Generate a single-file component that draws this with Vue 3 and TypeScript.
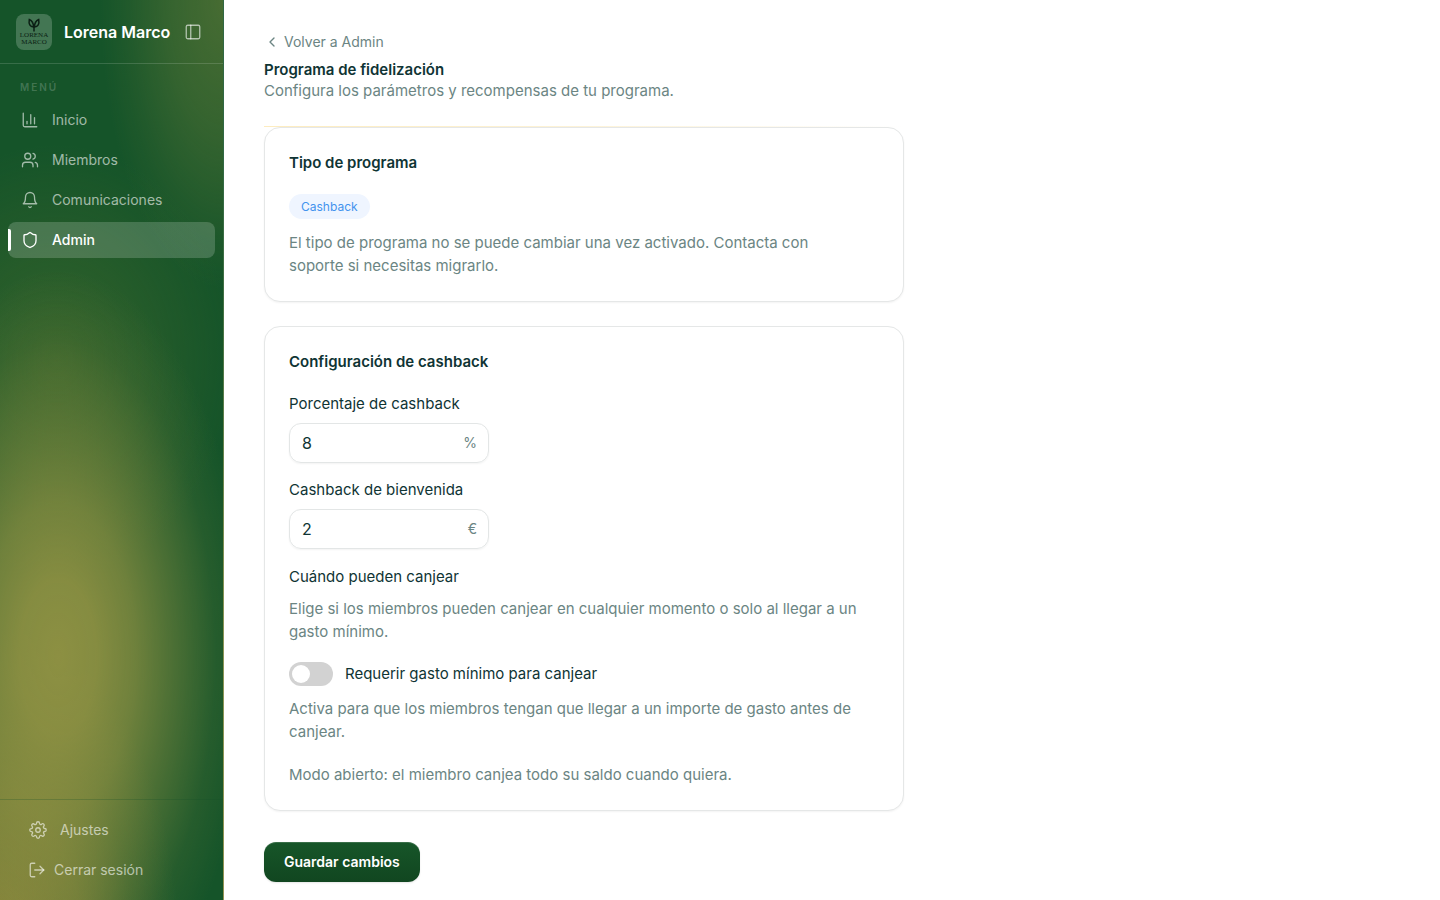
<script setup lang="ts">
import { ref } from 'vue'

interface NavItem {
  label: string
  active: boolean
  paths: string[]
}

const navItems: NavItem[] = [
  {
    label: 'Inicio',
    active: false,
    paths: ['M3 3v16a2 2 0 0 0 2 2h16', 'M18 17V9', 'M13 17V5', 'M8 17v-3'],
  },
  {
    label: 'Miembros',
    active: false,
    paths: [
      'M16 21v-2a4 4 0 0 0-4-4H6a4 4 0 0 0-4 4v2',
      'M13 7a4 4 0 1 1-8 0a4 4 0 0 1 8 0',
      'M22 21v-2a4 4 0 0 0-3-3.87',
      'M16 3.13a4 4 0 0 1 0 7.75',
    ],
  },
  {
    label: 'Comunicaciones',
    active: false,
    paths: ['M6 8a6 6 0 0 1 12 0c0 7 3 9 3 9H3s3-2 3-9', 'M10.3 21a1.94 1.94 0 0 0 3.4 0'],
  },
  {
    label: 'Admin',
    active: true,
    paths: [
      'M20 13c0 5-3.5 7.5-7.66 8.95a1 1 0 0 1-.67-.01C7.5 20.5 4 18 4 13V6a1 1 0 0 1 1-1c2 0 4.5-1.2 6.24-2.72a1.17 1.17 0 0 1 1.52 0C14.51 3.81 17 5 19 5a1 1 0 0 1 1 1z',
    ],
  },
]

const percentage = ref('8')
const welcome = ref('2')
const requireMinimum = ref(false)
</script>

<template>
  <div class="layout">
    <aside class="sidebar">
      <header class="brand">
        <div class="logo">
          <svg class="logo-mark" viewBox="0 0 28 14" aria-hidden="true">
            <path d="M14 13.500V7" />
            <path d="M13.500 9C10 9 8.500 6 9.300 1.500C12 2.500 13.500 5 13.500 9Z" />
            <path d="M14.500 9C18 9 19.500 6 18.700 1.500C16 2.500 14.500 5 14.500 9Z" />
          </svg>
          <span>LORENA</span>
          <span>MARCO</span>
        </div>
        <strong class="brand-name">Lorena Marco</strong>
        <button class="collapse" type="button" aria-label="Contraer menú">
          <svg class="icon" viewBox="0 0 24 24" aria-hidden="true">
            <rect x="3" y="3" width="18" height="18" rx="2" />
            <path d="M9 3v18" />
          </svg>
        </button>
      </header>

      <nav class="nav">
        <p class="nav-title">MENÚ</p>
        <a
          v-for="item in navItems"
          :key="item.label"
          href="#"
          class="nav-link"
          :class="{ active: item.active }"
        >
          <svg class="icon" viewBox="0 0 24 24" aria-hidden="true">
            <path v-for="d in item.paths" :key="d" :d="d" />
          </svg>
          <span>{{ item.label }}</span>
        </a>
      </nav>

      <footer class="side-footer">
        <a href="#" class="nav-link">
          <svg class="icon" viewBox="0 0 24 24" aria-hidden="true">
            <circle cx="12" cy="12" r="3" />
            <path
              d="M19.4 15a1.65 1.65 0 0 0 .33 1.82l.06.06a2 2 0 0 1 0 2.83 2 2 0 0 1-2.83 0l-.06-.06a1.65 1.65 0 0 0-1.82-.33 1.65 1.65 0 0 0-1 1.51V21a2 2 0 0 1-2 2 2 2 0 0 1-2-2v-.09A1.65 1.65 0 0 0 9 19.4a1.65 1.65 0 0 0-1.82.33l-.06.06a2 2 0 0 1-2.83 0 2 2 0 0 1 0-2.83l.06-.06a1.65 1.65 0 0 0 .33-1.82 1.65 1.65 0 0 0-1.51-1H3a2 2 0 0 1-2-2 2 2 0 0 1 2-2h.09A1.65 1.65 0 0 0 4.6 9a1.65 1.65 0 0 0-.33-1.82l-.06-.06a2 2 0 0 1 0-2.83 2 2 0 0 1 2.83 0l.06.06a1.65 1.65 0 0 0 1.82.33H9a1.65 1.65 0 0 0 1-1.51V3a2 2 0 0 1 2-2 2 2 0 0 1 2 2v.09a1.65 1.65 0 0 0 1 1.51 1.65 1.65 0 0 0 1.82-.33l.06-.06a2 2 0 0 1 2.83 0 2 2 0 0 1 0 2.83l-.06.06a1.65 1.65 0 0 0-.33 1.82V9a1.65 1.65 0 0 0 1.51 1H21a2 2 0 0 1 2 2 2 2 0 0 1-2 2h-.09a1.65 1.65 0 0 0-1.51 1z"
            />
          </svg>
          <span>Ajustes</span>
        </a>
        <button class="nav-link logout" type="button">
          <svg class="icon" viewBox="0 0 24 24" aria-hidden="true">
            <path d="M9 21H5a2 2 0 0 1-2-2V5a2 2 0 0 1 2-2h4" />
            <path d="m16 17 5-5-5-5" />
            <path d="M21 12H9" />
          </svg>
          <span>Cerrar sesión</span>
        </button>
      </footer>
    </aside>

    <main class="main">
      <div class="content">
        <a href="#" class="back">
          <svg class="icon" viewBox="0 0 24 24" aria-hidden="true"><path d="m15 18-6-6 6-6" /></svg>
          <span>Volver a Admin</span>
        </a>
        <header class="page-head">
          <h1>Programa de fidelización</h1>
          <p>Configura los parámetros y recompensas de tu programa.</p>
        </header>

        <section class="card">
          <h2>Tipo de programa</h2>
          <span class="badge">Cashback</span>
          <p class="text">
            El tipo de programa no se puede cambiar una vez activado. Contacta con<br />
            soporte si necesitas migrarlo.
          </p>
        </section>

        <form class="form" @submit.prevent>
          <section class="card">
            <h2>Configuración de cashback</h2>
            <div class="field">
              <label for="percentage">Porcentaje de cashback</label>
              <div class="input-box">
                <input id="percentage" v-model="percentage" type="text" inputmode="decimal" />
                <span>%</span>
              </div>
            </div>
            <div class="field">
              <label for="welcome">Cashback de bienvenida</label>
              <div class="input-box">
                <input id="welcome" v-model="welcome" type="text" inputmode="decimal" />
                <span>€</span>
              </div>
            </div>
            <div class="redeem">
              <h3>Cuándo pueden canjear</h3>
              <p class="text">
                Elige si los miembros pueden canjear en cualquier momento o solo al llegar a un
                gasto mínimo.
              </p>
            </div>
            <div class="switch-row">
              <input id="require-minimum" v-model="requireMinimum" type="checkbox" role="switch" />
              <label for="require-minimum">Requerir gasto mínimo para canjear</label>
            </div>
            <p class="text">
              Activa para que los miembros tengan que llegar a un importe de gasto antes de canjear.
            </p>
            <p class="text mode">Modo abierto: el miembro canjea todo su saldo cuando quiera.</p>
          </section>

          <button class="save" type="submit">Guardar cambios</button>
        </form>
      </div>
    </main>
  </div>
</template>

<style>
body {
  margin: 0;
  background: #fff;
}
</style>

<style scoped>
* {
  box-sizing: border-box;
}

.layout {
  display: flex;
  min-height: 100vh;
  color: #0f3434;
  font-family: Inter, 'Liberation Sans', sans-serif;
  font-size: 15px;
  line-height: 22px;
}

h1,
h2,
h3,
p {
  margin: 0;
}

a {
  color: inherit;
  text-decoration: none;
}

button,
input {
  font: inherit;
}

button {
  border: 0;
  background: none;
  cursor: pointer;
}

.icon {
  flex: none;
  width: 18px;
  height: 18px;
  fill: none;
  stroke: currentColor;
  stroke-width: 1.75;
  stroke-linecap: round;
  stroke-linejoin: round;
}

.sidebar {
  display: flex;
  flex: none;
  flex-direction: column;
  width: 224px;
  border-right: 1px solid rgba(255, 255, 255, 0.12);
  background:
    radial-gradient(ellipse 86% 43% at 26% 73%, rgba(149, 148, 68, 0.93) 0%, rgba(149, 148, 68, 0.88) 20%, rgba(149, 148, 68, 0.7) 40%, rgba(149, 148, 68, 0.4) 62%, rgba(149, 148, 68, 0.13) 82%, rgba(149, 148, 68, 0) 100%),
    radial-gradient(ellipse 80% 35% at 0% 105%, rgba(151, 138, 60, 0.9) 0%, rgba(151, 138, 60, 0.6) 45%, rgba(151, 138, 60, 0.2) 75%, rgba(151, 138, 60, 0) 100%),
    radial-gradient(ellipse 55% 32% at 100% 0%, rgba(120, 132, 60, 0.5) 0%, rgba(120, 132, 60, 0.32) 45%, rgba(120, 132, 60, 0.1) 80%, rgba(120, 132, 60, 0) 100%),
    radial-gradient(ellipse 80% 24% at 25% 40%, rgba(100, 120, 45, 0.38) 0%, rgba(100, 120, 45, 0.2) 50%, rgba(100, 120, 45, 0) 100%),
    #155429;
  color: rgba(255, 255, 255, 0.6);
}

.brand {
  display: flex;
  align-items: center;
  height: 64px;
  padding: 0 16px;
  border-bottom: 1px solid rgba(255, 255, 255, 0.15);
}

.logo {
  display: flex;
  flex: none;
  flex-direction: column;
  align-items: center;
  justify-content: center;
  width: 36px;
  height: 36px;
  border-radius: 8px;
  background: rgba(255, 255, 255, 0.2);
  color: #0b1f14;
  font-family: 'Liberation Serif', serif;
  font-size: 7px;
  line-height: 7px;
}

.logo-mark {
  width: 28px;
  height: 14px;
  fill: none;
  stroke: currentColor;
  stroke-width: 1.5;
}

.brand-name {
  flex: 1;
  margin-left: 12px;
  color: #fff;
  font-size: 16px;
  font-weight: 600;
  white-space: nowrap;
}

.collapse {
  display: flex;
  padding: 5px;
  color: inherit;
}

.nav {
  display: flex;
  flex: 1;
  flex-direction: column;
  gap: 4px;
  padding: 15px 8px;
}

.nav-title {
  margin-bottom: 3px;
  padding: 0 12px;
  color: rgba(255, 255, 255, 0.2);
  font-size: 10px;
  font-weight: 600;
  line-height: 16px;
  letter-spacing: 2px;
}

.nav-link {
  display: flex;
  align-items: center;
  gap: 13px;
  height: 36px;
  padding: 0 13px;
  border-radius: 8px;
  color: inherit;
  font-size: 14px;
  line-height: 20px;
}

.nav-link.active {
  position: relative;
  background: rgba(255, 255, 255, 0.18);
  color: #fff;
  font-weight: 500;
}

.nav-link.active::before {
  position: absolute;
  top: 7px;
  left: 0;
  width: 3px;
  height: 22px;
  border-radius: 0 2px 2px 0;
  background: #fff;
  content: '';
}

.side-footer {
  display: flex;
  flex-direction: column;
  gap: 4px;
  padding: 12px 16px;
  border-top: 1px solid rgba(20, 80, 40, 0.25);
}

.logout {
  gap: 8px;
  padding: 0 12px;
}

.main {
  flex: 1;
  min-width: 0;
  padding: 32px 40px 18px;
}

.content {
  max-width: 640px;
}

.back {
  display: flex;
  align-items: center;
  gap: 4px;
  width: max-content;
  color: #6b8583;
  font-size: 14px;
  line-height: 20px;
}

.back .icon {
  width: 16px;
  height: 16px;
  stroke-width: 2;
}

.page-head {
  padding: 7px 0 26px;
  background: linear-gradient(90deg, #fdecc0, #fdf3d8 50%, #fff) bottom / 100% 1px no-repeat;
}

h1,
h2 {
  font-size: 15px;
  font-weight: 600;
  line-height: 22px;
}

.page-head p,
.text {
  color: #6b8583;
}

.page-head p {
  line-height: 20px;
}

.card {
  padding: 24px;
  border: 1px solid #e5e7e7;
  border-radius: 16px;
  background: #fff;
  box-shadow: 0 1px 2px rgba(0, 0, 0, 0.05);
}

.badge {
  display: block;
  width: max-content;
  margin: 20px 0 12px;
  padding: 0 12px;
  border-radius: 13px;
  background: #eff5ff;
  color: #4393ee;
  font-size: 12px;
  line-height: 25px;
}

.text {
  line-height: 23px;
}

.form {
  margin-top: 24px;
}

.field {
  display: flex;
  flex-direction: column;
  gap: 8px;
  margin-top: 16px;
}

h2 + .field {
  margin-top: 20px;
}

.input-box {
  display: flex;
  align-items: center;
  width: 200px;
  height: 40px;
  padding: 0 11px 0 12px;
  border: 1px solid #e3e6e6;
  border-radius: 12px;
  box-shadow: 0 1px 2px rgba(0, 0, 0, 0.05);
}

.input-box input {
  flex: 1;
  min-width: 0;
  padding: 0;
  border: 0;
  outline: 0;
  background: none;
  color: inherit;
  font-size: 16px;
}

.input-box span {
  color: #6b8583;
  font-size: 14px;
}

.redeem {
  display: flex;
  flex-direction: column;
  gap: 9px;
  margin-top: 17px;
}

h3 {
  font-size: 15px;
  font-weight: 400;
  line-height: 22px;
}

.switch-row {
  display: flex;
  align-items: center;
  gap: 12px;
  margin: 19px 0 11px;
}

.switch-row input {
  display: flex;
  align-items: center;
  width: 44px;
  height: 24px;
  margin: 0;
  padding: 0 3px;
  border-radius: 12px;
  background: #d2d2d2;
  appearance: none;
  cursor: pointer;
}

.switch-row input::before {
  width: 18px;
  height: 18px;
  border-radius: 50%;
  background: #fff;
  content: '';
}

.switch-row input:checked {
  justify-content: flex-end;
  background: #155429;
}

.mode {
  margin-top: 20px;
}

.save {
  height: 40px;
  margin-top: 31px;
  padding: 0 20px;
  border-radius: 12px;
  background: linear-gradient(#175629, #114620);
  box-shadow: inset 0 1px 0 rgba(255, 255, 255, 0.15), 0 1px 2px rgba(0, 0, 0, 0.1);
  color: #fff;
  font-size: 14px;
  font-weight: 600;
}
</style>
